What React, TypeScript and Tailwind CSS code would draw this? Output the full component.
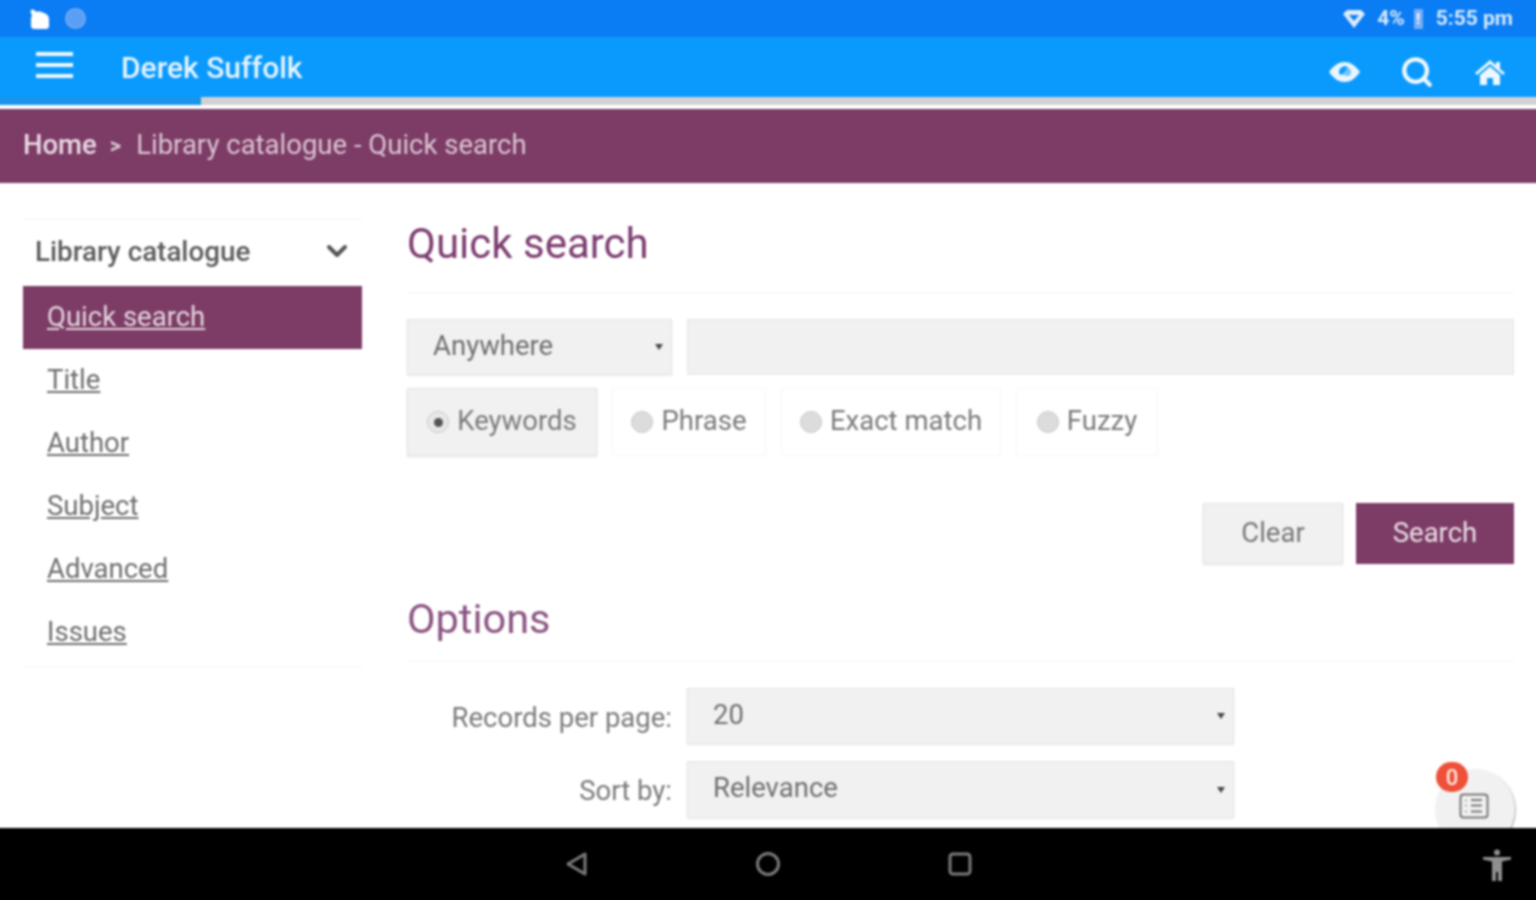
import { ChevronDown, Search } from 'lucide-react';

const sideLinks = ['Title', 'Author', 'Subject', 'Advanced', 'Issues'];

const radios = [
  { label: 'Keywords', width: 'w-[190px]', checked: true },
  { label: 'Phrase', width: 'w-[154px]', checked: false },
  { label: 'Exact match', width: 'w-[220px]', checked: false },
  { label: 'Fuzzy', width: 'w-[142px]', checked: false },
];

function SelectBox({ label, className }: { label: string; className: string }) {
  return (
    <div className={`flex items-center justify-between border border-[#e6e6e6] bg-[#f1f1f1] pl-[25px] pr-[8px] shadow-[0_1px_2px_rgba(0,0,0,0.08)] ${className}`}>
      <span className="-mt-[3px] text-[27.500px] text-[#6f6f6f]">{label}</span>
      <span className="h-0 w-0 border-x-[4px] border-t-[6px] border-x-transparent border-t-[#444]" />
    </div>
  );
}

function Radio({ label, width, checked }: { label: string; width: string; checked: boolean }) {
  return (
    <div
      className={`flex h-[68px] items-center justify-center gap-[8px] pb-[2px] ${width} ${
        checked ? 'border border-[#e4e4e4] bg-[#f1f1f1] shadow-[0_1px_2px_rgba(0,0,0,0.1)]' : 'border border-[#f7f7f7] bg-white'
      }`}
    >
      <span className={`mt-[2px] flex h-[22px] w-[22px] items-center justify-center rounded-full border border-[#c9c9c9] ${checked ? 'bg-[#e8e8e8]' : 'bg-[#dcdcdc]'}`}>
        {checked && <span className="h-[9px] w-[9px] rounded-full bg-[#555]" />}
      </span>
      <span className="text-[27.500px] text-[#7a7a7a]">{label}</span>
    </div>
  );
}

export default function App() {
  return (
    <div className="h-[900px] w-[1536px] overflow-hidden">
      {/* 8px bleed on every side so the soft focus does not fringe at the window edge */}
      <div className="-m-[8px] flex h-[916px] w-[1552px] flex-col bg-white font-['Roboto',sans-serif] blur-[0.9px]">
        {/* status bar */}
        <div className="flex h-[45px] items-center justify-between bg-[#0a7cf4] pl-[36px] pr-[31px] pt-[8px] text-white">
          <div className="flex items-center gap-[13px]">
            <svg width="24" height="24" viewBox="0 0 24 24" fill="#fff">
              <path d="M3 3c2-1 4 0 5 2 3-1 6 0 8 1 3 1 5 3 5 6v7c0 2-1 3-3 3H7c-3 0-4-1-4-3v-7c0-2 1-3 1-4-1-1-2-3-1-5z" />
            </svg>
            <span className="h-[21px] w-[21px] rounded-full border-2 border-[#6ea9f5] bg-[#5a9ef5]" />
          </div>
          <div className="flex items-center text-[21px] font-bold text-[#d6e8fd]">
            <svg width="24" height="20" viewBox="0 0 24 20" fill="#dcebfd">
              <path d="M1 5 5 1h14l4 4-11 14zM7 6l5 6 5-6z" fillRule="evenodd" />
            </svg>
            <span className="ml-[11px]">4%</span>
            <span className="ml-[9px] flex h-[20px] w-[9px] items-center justify-center rounded-[1px] bg-[#77aef5] text-[14px] leading-none text-white">!</span>
            <span className="ml-[13px]">5:55 pm</span>
          </div>
        </div>

        {/* app bar */}
        <div className="flex h-[60px] items-center justify-between bg-[#0a9afe] pl-[44px] pr-[39px] text-white">
          <div className="flex items-center">
            <svg width="37" height="28" viewBox="0 0 37 28" fill="#eef8ff" className="-mt-[5px]">
              <rect y="1" width="37" height="4" />
              <rect y="12" width="37" height="4" />
              <rect y="23" width="37" height="4" />
            </svg>
            <span className="ml-[48px] text-[30px] font-medium text-[#e6f4ff]">Derek Suffolk</span>
          </div>
          <div className="mt-[9px] flex items-center">
            <svg width="33" height="22" viewBox="0 0 33 22" fill="#eaf6ff">
              <path d="M1 11C6 4 11 1 16.500 1S27 4 32 11c-5 7-10 10-15.500 10S6 18 1 11z" />
              <path d="M11 11a6 6 0 0 1 9-5l-6 8c-2 0-3-1-3-3z" fill="#0a9afe" />
              <circle cx="19" cy="11" r="4" fill="#0a9afe" opacity="0.55" />
            </svg>
            <Search size={34} strokeWidth={3} color="#eef8ff" className="ml-[39px]" />
            <svg width="30" height="26" viewBox="0 0 30 26" fill="#eef8ff" className="ml-[41px]">
              <path d="M15 1 0 14l2 2 13-11 13 11 2-2-5-4V3h-4v3.500z" />
              <path d="M5 16 15 7.500 25 16v10h-7v-7h-6v7H5z" />
            </svg>
          </div>
        </div>

        {/* page load bar */}
        <div className="h-[8px] bg-[#d2d2d2]">
          <div className="h-full w-[209px] bg-[#1c94ec]" />
        </div>
        <div className="h-[4px] bg-white" />

        {/* breadcrumb */}
        <div className="flex h-[74px] items-center bg-[#7c3c66] pb-[2px] pl-[31px] text-[27.500px] text-[#dcc6d4]">
          <span className="font-medium text-[#ead9e4]">Home</span>
          <span className="ml-[13px] text-[22px] font-bold">&gt;</span>
          <span className="ml-[15px]">Library catalogue - Quick search</span>
        </div>

        {/* content */}
        <div className="relative flex min-h-0 flex-1 overflow-hidden pl-[31px] pr-[30px] pt-[36px]">
          <aside className="w-[339px] shrink-0">
            <div className="border-y border-[#f2f2f2] pb-[2px]">
              <div className="flex h-[66px] items-center justify-between pb-[2px] pl-[12px] pr-[9px]">
                <span className="text-[27.800px] font-medium text-[#5c5c5c]">Library catalogue</span>
                <ChevronDown size={32} strokeWidth={3} color="#555" className="-mt-[2px]" />
              </div>
              <div className="flex h-[63px] items-center bg-[#7c3c66] pb-[2px] pl-[24px] text-[27.500px] text-[#e6d6e0] underline underline-offset-2">Quick search</div>
              {sideLinks.map((link) => (
                <div key={link} className="flex h-[63px] items-center pb-[2px] pl-[24px] text-[27.500px] text-[#6e6e6e] underline underline-offset-2">
                  {link}
                </div>
              ))}
            </div>
          </aside>

          <main className="ml-[45px] flex-1">
            <h1 className="flex h-[50px] items-center text-[42px] leading-none text-[#7c3c70]">Quick search</h1>
            <div className="mt-[23px] border-t border-[#f2f2f2]" />

            <div className="mt-[26px] flex gap-[15px]">
              <SelectBox label="Anywhere" className="h-[56px] w-[265px]" />
              <div className="h-[56px] flex-1 border border-[#e6e6e6] bg-[#f1f1f1]" />
            </div>

            <div className="mt-[13px] flex gap-[15px]">
              {radios.map((r) => (
                <Radio key={r.label} {...r} />
              ))}
            </div>

            <div className="mt-[47px] flex justify-end gap-[13px]">
              <button className="h-[61px] w-[140px] border border-[#e4e4e4] bg-[#f1f1f1] pb-[2px] text-[27.500px] text-[#777] shadow-[0_1px_2px_rgba(0,0,0,0.1)]">Clear</button>
              <button className="h-[61px] w-[158px] bg-[#7c3c66] pb-[2px] text-[27.500px] text-[#ecdfe7]">Search</button>
            </div>

            <h2 className="mt-[30px] flex h-[50px] items-center text-[41.500px] leading-none text-[#8a5380]">Options</h2>
            <div className="mt-[17px] border-t border-[#f2f2f2]" />

            <div className="mt-[26px] flex items-center">
              <span className="mt-[3px] w-[265px] text-right text-[27.500px] text-[#7a7a7a]">Records per page:</span>
              <SelectBox label="20" className="ml-[15px] h-[56px] w-[547px]" />
            </div>
            <div className="mt-[17px] flex items-center">
              <span className="mt-[2px] w-[265px] text-right text-[27.500px] text-[#7a7a7a]">Sort by:</span>
              <SelectBox label="Relevance" className="ml-[15px] h-[57px] w-[547px]" />
            </div>
          </main>

          {/* floating basket button */}
          <div className="absolute left-[1443px] top-[586px] flex h-[80px] w-[80px] items-center justify-center rounded-full bg-[#f1f1f1] shadow-[1px_1px_1px_rgba(0,0,0,0.3)]">
            <svg width="30" height="26" viewBox="0 0 30 26" fill="none" stroke="#777" strokeWidth="2" className="mt-[-6px] ml-[-3px]">
              <rect x="1.500" y="1.500" width="27" height="23" rx="3" />
              <path d="M7 7v1M7 12v1M7 18v1M12 7h11M12 12.500h11M12 18.500h11" />
            </svg>
          </div>
          <div className="absolute left-[1444px] top-[579px] flex h-[30px] w-[32px] items-center justify-center rounded-full bg-[#ee5038] text-[22px] font-medium text-[#ffe9e4]">0</div>
        </div>

        {/* android nav */}
        <div className="relative flex h-[80px] shrink-0 items-center justify-center bg-black pb-[8px] pl-[2px]">
          <div className="flex items-center gap-[167px]">
            <svg width="22" height="26" viewBox="0 0 22 26" fill="none" stroke="#7a7a7a" strokeWidth="3" strokeLinejoin="round">
              <path d="M2 13 19 3v20z" />
            </svg>
            <svg width="26" height="26" viewBox="0 0 26 26" fill="none" stroke="#7a7a7a" strokeWidth="3">
              <circle cx="13" cy="13" r="10.500" />
            </svg>
            <svg width="24" height="24" viewBox="0 0 24 24" fill="none" stroke="#7a7a7a" strokeWidth="3">
              <rect x="2" y="2" width="20" height="20" rx="3" />
            </svg>
          </div>
          {/* accessibility figure */}
          <svg width="28" height="32" viewBox="0 0 28 32" fill="#8f8f8f" className="absolute left-[1491px] top-[21px]">
            <circle cx="14" cy="3.500" r="3" />
            <path d="M0 8h28v2.500l-9 2V32h-4v-9h-2v9H9V12.500l-9-2z" />
          </svg>
        </div>
      </div>
    </div>
  );
}
